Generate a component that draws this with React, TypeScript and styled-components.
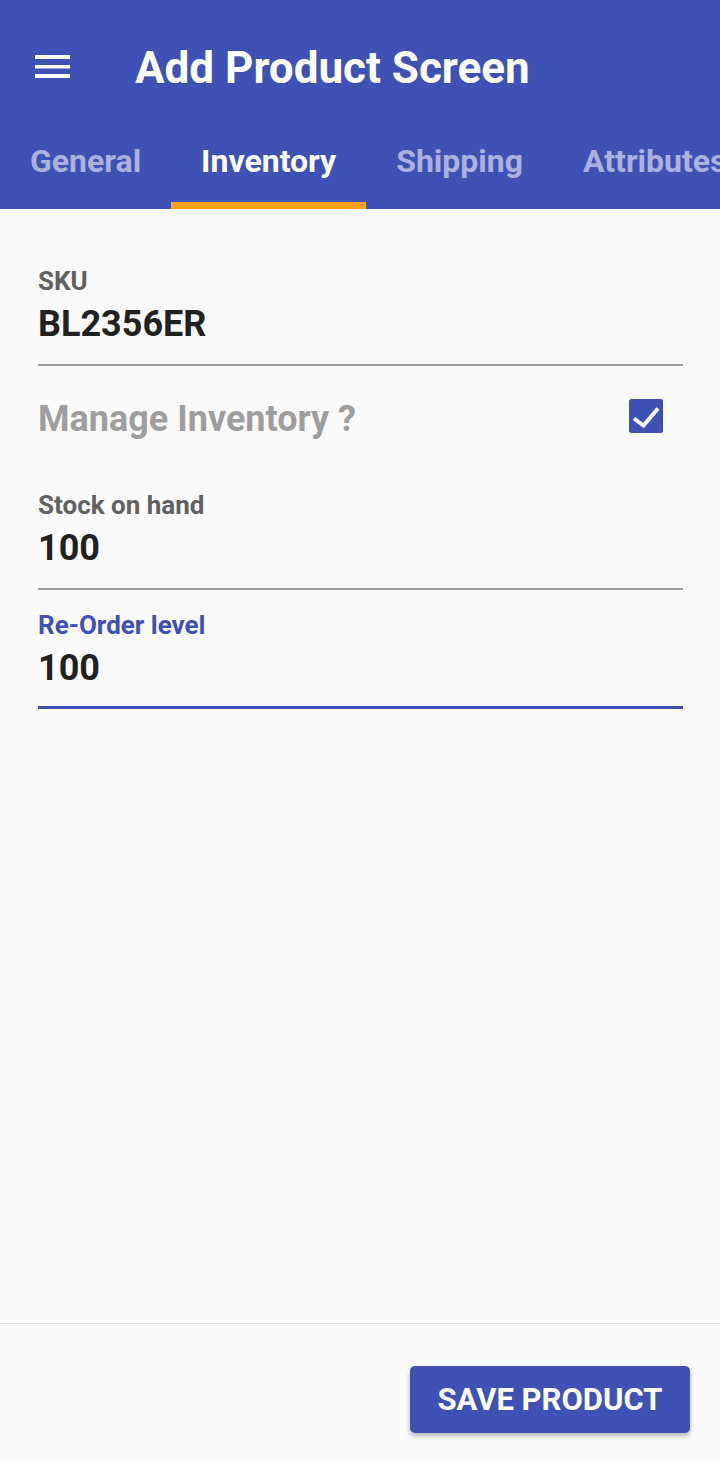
import React from "react";
import styled, { createGlobalStyle } from "styled-components";

const Global = createGlobalStyle`
  html, body { margin: 0; padding: 0; background: #fafafa; }
  body { font-family: Roboto, "Noto Sans", Arial, sans-serif; }
  * { box-sizing: border-box; }
`;

const BLUE = "#3F51B5";

const Page = styled.div`
  min-height: 100vh;
  display: flex;
  flex-direction: column;
  background: #fafafa;
`;

const Header = styled.header`
  background: ${BLUE};
  display: flex;
  flex-direction: column;
`;

const Toolbar = styled.div`
  height: 128px;
  padding: 8px 0 0 35px;
  display: flex;
  align-items: center;
  gap: 65px;
`;

const MenuIcon = styled.svg`
  width: 35px;
  height: 23px;
  margin-bottom: 3px;
  flex: none;
`;

const Title = styled.h1`
  margin: 0;
  font-size: 44px;
  line-height: 44px;
  font-weight: 700;
  color: #fff;
  white-space: nowrap;
`;

const Tabs = styled.nav`
  height: 81px;
  display: flex;
  overflow: hidden;
  white-space: nowrap;
`;

const Tab = styled.div<{ $active?: boolean }>`
  flex: none;
  height: 81px;
  padding: 17px 30px 0;
  font-size: 32px;
  line-height: 32px;
  font-weight: 700;
  color: ${(p) => (p.$active ? "#fff" : "rgba(255,255,255,0.56)")};
  border-bottom: 7px solid ${(p) => (p.$active ? "#FF9F1A" : "transparent")};
`;

const Content = styled.main`
  flex: 1;
  padding: 59px 37px 0 38px;
  display: flex;
  flex-direction: column;
`;

const Field = styled.div<{ $focused?: boolean }>`
  display: flex;
  flex-direction: column;
  padding-bottom: ${(p) => (p.$focused ? "20px" : "22px")};
  border-bottom: ${(p) => (p.$focused ? `3px solid ${BLUE}` : "2px solid #9E9E9E")};
`;

const Label = styled.label<{ $focused?: boolean }>`
  font-size: 26px;
  line-height: 26px;
  font-weight: 700;
  color: ${(p) => (p.$focused ? BLUE : "#616161")};
  margin-bottom: 12px;
`;

const Value = styled.div`
  font-size: 36px;
  line-height: 36px;
  font-weight: 700;
  color: #212121;
`;

const ToggleRow = styled.div`
  display: flex;
  align-items: center;
  justify-content: space-between;
  height: 34px;
  margin: 33px 20px 59px 0;
`;

const ToggleText = styled.span`
  font-size: 36px;
  line-height: 36px;
  font-weight: 700;
  color: #9E9E9E;
  margin-top: 5px;
`;

const CheckBox = styled.svg`
  width: 34px;
  height: 34px;
  flex: none;
`;

const Spacer = styled.div`
  height: 22px;
`;

const Footer = styled.footer`
  border-top: 1px solid #E0E0E0;
  padding: 42px 30px 28px;
  display: flex;
  justify-content: flex-end;
`;

const SaveButton = styled.button`
  width: 280px;
  height: 67px;
  border: none;
  border-radius: 5px;
  background: ${BLUE};
  color: #fff;
  font-family: Roboto, "Noto Sans", Arial, sans-serif;
  font-size: 31px;
  font-weight: 700;
  box-shadow: 0 3px 5px rgba(0, 0, 0, 0.28);
`;

export default function App() {
  return (
    <Page>
      <Global />
      <Header>
        <Toolbar>
          <MenuIcon viewBox="0 0 35 23">
            <rect x="0" y="0" width="35" height="4" fill="#fff" />
            <rect x="0" y="10" width="35" height="3.5" fill="#fff" />
            <rect x="0" y="19" width="35" height="4" fill="#fff" />
          </MenuIcon>
          <Title>Add Product Screen</Title>
        </Toolbar>
        <Tabs>
          <Tab>General</Tab>
          <Tab $active>Inventory</Tab>
          <Tab>Shipping</Tab>
          <Tab>Attributes</Tab>
        </Tabs>
      </Header>
      <Content>
        <Field>
          <Label>SKU</Label>
          <Value>BL2356ER</Value>
        </Field>
        <ToggleRow>
          <ToggleText>Manage Inventory ?</ToggleText>
          <CheckBox viewBox="0 0 34 34">
            <rect x="0" y="0" width="34" height="34" rx="2.5" fill={BLUE} />
            <path
              d="M5 19.5l9.5 7L29 9.5"
              fill="none"
              stroke="#fff"
              strokeWidth="4"
              strokeLinejoin="miter"
            />
          </CheckBox>
        </ToggleRow>
        <Field>
          <Label>Stock on hand</Label>
          <Value>100</Value>
        </Field>
        <Spacer />
        <Field $focused>
          <Label $focused>Re-Order level</Label>
          <Value>100</Value>
        </Field>
      </Content>
      <Footer>
        <SaveButton>SAVE PRODUCT</SaveButton>
      </Footer>
    </Page>
  );
}
